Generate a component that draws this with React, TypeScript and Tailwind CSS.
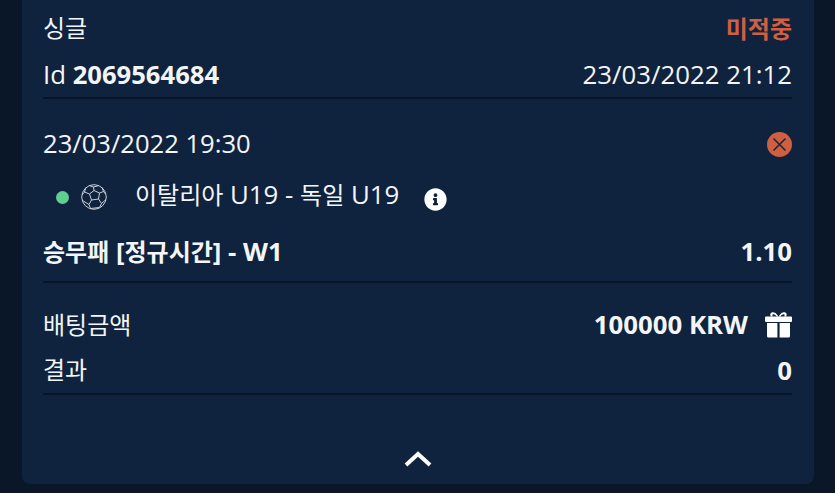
import { FaInfoCircle } from "react-icons/fa";

const fontStack = "font-['Open_Sans','Noto_Sans_CJK_KR',sans-serif]";

const SoccerBall = () => (
  <svg width="26" height="26" viewBox="0 0 26 26" fill="none" stroke="#c9ced6" strokeWidth="1">
    <circle cx="13" cy="13" r="12.3" />
    <path d="M8.5 10 L13 6.5 L18.5 9 L17.5 15 L10.5 16 Z" />
    <path d="M13 6.5 L12.5 3 L8 1.5 M12.5 3 L18 1.5 M18.5 9 L22.5 7.5 L24.5 10 M22.5 7.5 L21 3.5 M17.5 15 L20.5 19.5 L25 15.5 M20.5 19.5 L18.5 23.5 M10.5 16 L8 20.5 L1.5 16.5 M8 20.5 L9.5 24.5 L18.5 23.5 M8.5 10 L3.5 8 L1 11 M3.5 8 L5 3.5" />
  </svg>
);

const GiftIcon = () => (
  <svg width="27" height="27" viewBox="0 0 27 27" fill="#fff">
    <path d="M13.5 5.5 C11 1.5 9 1 7.5 1.2 C5 1.6 4.8 4 6 5.5 H8 C7 4.5 7.2 3.2 8.2 3.2 C9.8 3.2 11 4.5 11.5 5.5 Z" />
    <path d="M13.5 5.5 C16 1.5 18 1 19.5 1.2 C22 1.6 22.2 4 21 5.5 H19 C20 4.5 19.8 3.2 18.8 3.2 C17.2 3.2 16 4.5 15.5 5.5 Z" />
    <path d="M1 5.5 H26 A1 1 0 0 1 27 6.5 V10 A1 1 0 0 1 26 11 H1 A1 1 0 0 1 0 10 V6.5 A1 1 0 0 1 1 5.5 Z" />
    <path d="M2 12 H12.4 V26.5 H3.5 A1.5 1.5 0 0 1 2 25 Z" />
    <path d="M14.6 12 H25 V25 A1.5 1.5 0 0 1 23.5 26.5 H14.6 Z" />
  </svg>
);

const Row = ({ children, className = "h-[46px]" }: { children: React.ReactNode; className?: string }) => (
  <div className={`flex items-center justify-between ${className}`}>{children}</div>
);

// Korean runs are a notch smaller than the latin text around them
const Ko = ({ children }: { children: React.ReactNode }) => <span className="text-[24px]">{children}</span>;

const Divider = () => <div className="h-[2px] bg-[#081526]" />;

export default function App() {
  return (
    <div className={`h-[493px] w-[835px] overflow-hidden bg-[#0a1729] pl-[22px] pr-[21px] text-[25.8px] leading-[46px] text-[#f4f5f7] ${fontStack}`}>
      <div className="flex h-[484px] flex-col rounded-b-lg bg-[#0f233f] pl-[21px] pr-[22px] pt-[5px]">
        <Row>
          <Ko>싱글</Ko>
          <span className="font-bold text-[#cf5f41]">
            <Ko>미적중</Ko>
          </span>
        </Row>
        <Row>
          <span>
            Id <b className="text-[25.6px] font-bold">2069564684</b>
          </span>
          <span>23/03/2022 21:12</span>
        </Row>
        <Divider />

        <Row className="mt-[22px] h-[46px]">
          <span className="text-[25.6px]">23/03/2022 19:30</span>
          <span className="flex h-[25px] w-[25px] items-center justify-center rounded-full bg-[#cf5f41]">
            <svg width="15" height="15" viewBox="0 0 15 15" stroke="#1a2638" strokeWidth="1.5">
              <path d="M1.5 1.5 L13.5 13.5 M13.5 1.5 L1.5 13.5" />
            </svg>
          </span>
        </Row>
        <div className="mt-[4px] flex h-[46px] items-center pl-[13px]">
          <span className="mt-[6px] h-[13px] w-[13px] rounded-full bg-[#5fcf8f]" />
          <span className="ml-[12px] mt-[6px] flex">
            <SoccerBall />
          </span>
          <span className="ml-[28px]">
            <Ko>이탈리아</Ko> U19 - <Ko>독일</Ko> U19
          </span>
          <FaInfoCircle className="ml-[25px] mt-[10px] text-[23px] text-white" />
        </div>
        <Row className="mt-[11px] h-[46px] font-bold">
          <span>
            <Ko>승무패</Ko> [<Ko>정규시간</Ko>] - W1
          </span>
          <span>1.10</span>
        </Row>
        <div className="mt-[7px]">
          <Divider />
        </div>

        <Row className="mt-[19px] h-[45px]">
          <Ko>배팅금액</Ko>
          <span className="flex items-center gap-[17px] font-bold">
            <span className="-mt-[2px]">100000 KRW</span>
            <GiftIcon />
          </span>
        </Row>
        <Row className="h-[45px]">
          <Ko>결과</Ko>
          <span className="font-bold">0</span>
        </Row>
        <div className="mt-[1px]">
          <Divider />
        </div>

        <div className="mt-[54px] flex justify-center">
          <svg width="30" height="18" viewBox="0 0 30 18" fill="none" stroke="#fff" strokeWidth="4">
            <path d="M3 16 L15 5 L27 16" />
          </svg>
        </div>
      </div>
    </div>
  );
}
